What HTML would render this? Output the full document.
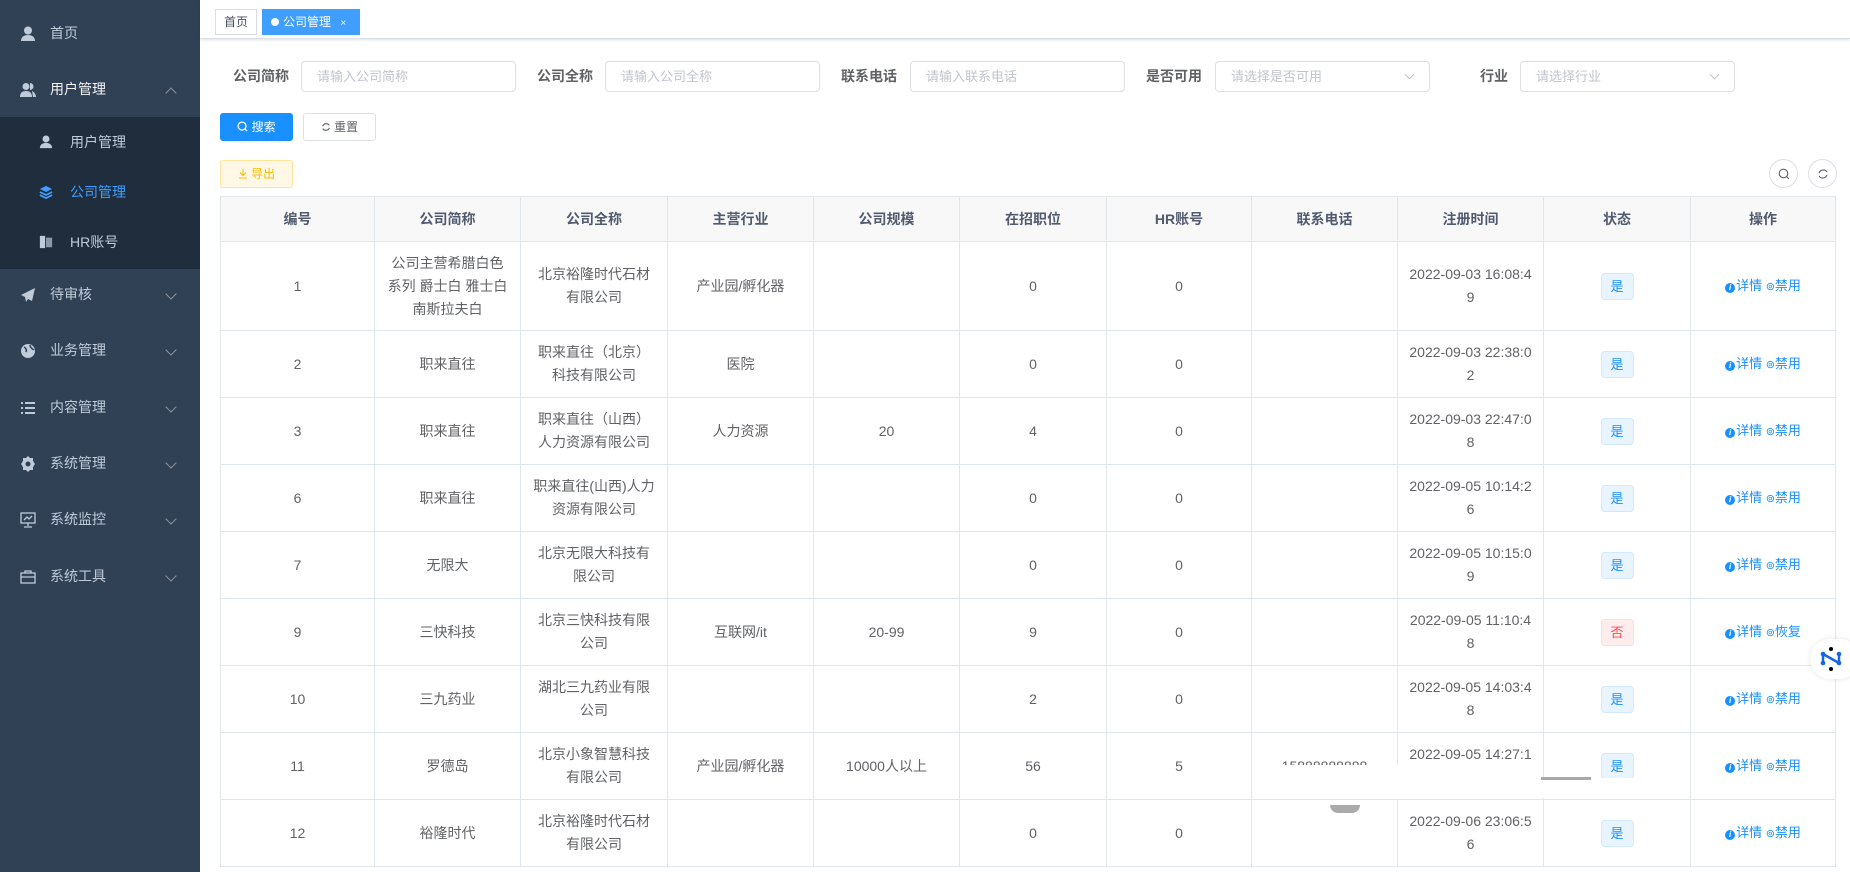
<!DOCTYPE html>
<html><head><meta charset="utf-8">
<style>
*{box-sizing:border-box;margin:0;padding:0}
html{width:1850px;height:872px;overflow:hidden}
body{width:1850px;height:872px;overflow:hidden;background:#fff;font-family:"Liberation Sans","Noto Sans CJK SC",sans-serif;position:relative;color:#606266}
.side{position:absolute;left:0;top:0;width:200px;height:872px;background:#304156}
.mi{position:absolute;left:0;width:200px;height:56px;color:#bfcbd9;font-size:14px;line-height:56px;padding-left:50px}
.mi svg{position:absolute;left:20px;top:21px}
.ar{position:absolute;left:167px;top:24px;width:8px;height:8px;border-right:1px solid #909399;border-bottom:1px solid #909399;transform:rotate(45deg)}
.ar.up{top:28px;transform:rotate(225deg)}
.sub{position:absolute;left:0;top:117px;width:200px;height:152px;background:#1f2d3d}
.si{position:absolute;left:0;width:200px;height:50px;line-height:50px;font-size:14px;color:#bfcbd9;padding-left:70px}
.si svg{position:absolute;left:39px;top:18px}
.tags{position:absolute;left:200px;top:0;right:0;height:39px;border-bottom:1px solid #d8dce5;box-shadow:0 1px 3px rgba(0,0,0,.12)}
.tag{position:absolute;top:9px;height:26px;line-height:24px;font-size:12px;border:1px solid #d8dce5;padding:0 8px;color:#495060;background:#fff}
.lbl{position:absolute;top:66px;font-size:14px;font-weight:bold;color:#606266;line-height:20px}
.inp{position:absolute;top:61px;height:31px;width:215px;border:1px solid #dcdfe6;border-radius:4px;font-size:13px;color:#c0c4cc;padding-left:15px;line-height:29px}
.dn{position:absolute;right:16px;top:9px;width:7px;height:7px;border-right:1px solid #c0c4cc;border-bottom:1px solid #c0c4cc;transform:rotate(45deg)}
.btn{position:absolute;height:28px;width:73px;border-radius:3px;font-size:12px;line-height:26px;text-align:center}
.cb{position:absolute;top:159px;width:29px;height:29px;border:1px solid #dcdfe6;border-radius:50%}
.cb svg{position:absolute;left:8px;top:8px}
table{position:absolute;left:220px;top:196px;width:1615px;border-collapse:collapse;table-layout:fixed;font-size:14px}
th{background:#f8f8f9;color:#515a6e;height:45px;border:1px solid #dfe6ec;font-weight:bold;font-size:14px}
td{border:1px solid #dfe6ec;text-align:center;line-height:23px;height:67px;color:#606266}
.t{display:inline-block;width:33px;height:27px;line-height:25px;font-size:13px;border-radius:4px;border:1px solid #d1e9ff;background:#e8f4ff;color:#1890ff}
.t.n{border-color:#ffdbdb;background:#ffeded;color:#ff4949}
.op{color:#1890ff;font-size:13px}
.op b{display:inline-block;width:10px;height:10px;border-radius:50%;background:#1890ff;color:#fff;font-size:8px;line-height:10px;font-style:italic;vertical-align:0px;margin-right:1px}
.op i{font-style:normal;font-size:11px}
</style></head><body>
<div class="side">
 <div class="mi" style="top:5px"><svg width="16" height="16" viewBox="0 0 16 16"><circle cx="8" cy="4.5" r="4" fill="#bfcbd9"/><path d="M1 15c0-4 3-6 7-6s7 2 7 6z" fill="#bfcbd9"/></svg>首页</div>
 <div class="mi" style="top:61px;color:#f4f4f5"><svg width="16" height="16" viewBox="0 0 16 16"><circle cx="6" cy="4.5" r="3.5" fill="#bfcbd9"/><path d="M0 15c0-4 2-6 6-6s6 2 6 6z" fill="#bfcbd9"/><path d="M10 1a3.5 3.5 0 010 7M12 9c2 1 4 3 4 6h-3" fill="#bfcbd9"/></svg>用户管理<span class="ar up"></span></div>
 <div class="sub">
  <div class="si" style="top:0"><svg width="14" height="14" viewBox="0 0 16 16"><circle cx="8" cy="4.5" r="4" fill="#bfcbd9"/><path d="M1 15c0-4 3-6 7-6s7 2 7 6z" fill="#bfcbd9"/></svg>用户管理</div>
  <div class="si" style="top:50px;color:#409eff"><svg width="14" height="14" viewBox="0 0 16 16"><path d="M8 1l7 3.5-7 3.5-7-3.5z" fill="#409eff"/><path d="M1 8l7 3.5 7-3.5M1 11.5l7 3.5 7-3.5" stroke="#409eff" stroke-width="2" fill="none"/></svg>公司管理</div>
  <div class="si" style="top:100px"><svg width="14" height="14" viewBox="0 0 16 16"><rect x="1" y="1" width="6" height="14" fill="#bfcbd9"/><rect x="8" y="3" width="7" height="11" fill="#8a98a8"/></svg>HR账号</div>
 </div>
 <div class="mi" style="top:266px"><svg width="16" height="16" viewBox="0 0 16 16"><path d="M15 1L1 8l4 2 1 5 2-3 4 2z" fill="#bfcbd9"/></svg>待审核<span class="ar"></span></div>
 <div class="mi" style="top:322px"><svg width="16" height="16" viewBox="0 0 16 16"><circle cx="8" cy="8" r="7" fill="#bfcbd9"/><path d="M4 4c2 1 3 3 2 5M10 2c0 3 3 4 4 5" stroke="#304156" stroke-width="1.5" fill="none"/></svg>业务管理<span class="ar"></span></div>
 <div class="mi" style="top:379px"><svg width="16" height="16" viewBox="0 0 16 16"><path d="M1 2h2v2H1zM1 7h2v2H1zM1 12h2v2H1zM5 2h10v2H5zM5 7h10v2H5zM5 12h10v2H5z" fill="#bfcbd9"/></svg>内容管理<span class="ar"></span></div>
 <div class="mi" style="top:435px"><svg width="16" height="16" viewBox="0 0 16 16"><path d="M8 0l2 2h3v3l2 3-2 3v3h-3l-2 2-2-2H3v-3L1 8l2-3V2h3z" fill="#bfcbd9"/><circle cx="8" cy="8" r="2.5" fill="#304156"/></svg>系统管理<span class="ar"></span></div>
 <div class="mi" style="top:491px"><svg width="16" height="16" viewBox="0 0 16 16"><rect x="1" y="1" width="14" height="10" stroke="#bfcbd9" fill="none" stroke-width="1.3"/><path d="M4 8l3-3 2 2 3-3M8 11v3M4 15h8" stroke="#bfcbd9" fill="none" stroke-width="1.3"/></svg>系统监控<span class="ar"></span></div>
 <div class="mi" style="top:548px"><svg width="16" height="16" viewBox="0 0 16 16"><rect x="1" y="4" width="14" height="10" stroke="#bfcbd9" fill="none" stroke-width="1.3"/><path d="M5 4V2h6v2M1 8h14" stroke="#bfcbd9" fill="none" stroke-width="1.3"/></svg>系统工具<span class="ar"></span></div>
</div>

<div class="tags">
 <div class="tag" style="left:15px">首页</div>
 <div class="tag" style="left:62px;width:98px;background:#409eff;border-color:#409eff;color:#fff;padding-left:8px"><span style="display:inline-block;width:8px;height:8px;border-radius:50%;background:#fff;margin-right:4px"></span>公司管理 <span style="font-size:10px;margin-left:6px">×</span></div>
</div>

<div class="lbl" style="left:233px">公司简称</div><div class="inp" style="left:301px">请输入公司简称</div>
<div class="lbl" style="left:537px">公司全称</div><div class="inp" style="left:605px">请输入公司全称</div>
<div class="lbl" style="left:841px">联系电话</div><div class="inp" style="left:910px">请输入联系电话</div>
<div class="lbl" style="left:1146px">是否可用</div><div class="inp" style="left:1215px">请选择是否可用<span class="dn"></span></div>
<div class="lbl" style="left:1480px">行业</div><div class="inp" style="left:1520px">请选择行业<span class="dn"></span></div>

<div class="btn" style="left:220px;top:113px;background:#1890ff;border:1px solid #1890ff;color:#fff"><svg width="11" height="11" viewBox="0 0 12 12" style="vertical-align:-1px"><circle cx="5.5" cy="5.5" r="4.3" stroke="#fff" stroke-width="1.4" fill="none"/><path d="M8.5 8.5l2.5 2.5" stroke="#fff" stroke-width="1.4"/></svg> 搜索</div>
<div class="btn" style="left:303px;top:113px;border:1px solid #dcdfe6;color:#606266"><svg width="10" height="10" viewBox="0 0 12 12" style="vertical-align:-1px"><path d="M10 4A4.5 4.5 0 002 5M2 8a4.5 4.5 0 008-1" stroke="#606266" stroke-width="1.3" fill="none"/></svg> 重置</div>
<div class="btn" style="left:220px;top:160px;background:#fff8e6;border:1px solid #ffe399;color:#ffba00"><svg width="10" height="11" viewBox="0 0 10 11" style="vertical-align:-1px"><path d="M5 1v6M2 4.5L5 7.5 8 4.5M1 10h8" stroke="#ffba00" stroke-width="1.1" fill="none"/></svg> 导出</div>
<div class="cb" style="left:1769px"><svg width="12" height="12" viewBox="0 0 12 12"><circle cx="5.5" cy="5.5" r="4.3" stroke="#606266" stroke-width="1.1" fill="none"/><path d="M8.5 8.5l2.5 2.5" stroke="#606266" stroke-width="1.1"/></svg></div>
<div class="cb" style="left:1808px"><svg width="12" height="12" viewBox="0 0 12 12"><path d="M10 4A4.5 4.5 0 002 5M2 8a4.5 4.5 0 008-1" stroke="#606266" stroke-width="1.1" fill="none"/></svg></div>

<table>
<colgroup><col style="width:154px"><col style="width:146px"><col style="width:147px"><col style="width:146px"><col style="width:146px"><col style="width:147px"><col style="width:145px"><col style="width:146px"><col style="width:146px"><col style="width:147px"><col style="width:145px"></colgroup>
<tr><th>编号</th><th>公司简称</th><th>公司全称</th><th>主营行业</th><th>公司规模</th><th>在招职位</th><th>HR账号</th><th>联系电话</th><th>注册时间</th><th>状态</th><th>操作</th></tr>
<tr style="height:89px"><td style="height:89px">1</td><td>公司主营希腊白色<br>系列 爵士白 雅士白<br>南斯拉夫白</td><td>北京裕隆时代石材<br>有限公司</td><td>产业园/孵化器</td><td></td><td>0</td><td>0</td><td></td><td>2022-09-03 16:08:4<br>9</td><td><span class="t">是</span></td><td class="op"><b>i</b>详情 <i>⊚</i>禁用</td></tr>
<tr><td>2</td><td>职来直往</td><td>职来直往（北京）<br>科技有限公司</td><td>医院</td><td></td><td>0</td><td>0</td><td></td><td>2022-09-03 22:38:0<br>2</td><td><span class="t">是</span></td><td class="op"><b>i</b>详情 <i>⊚</i>禁用</td></tr>
<tr><td>3</td><td>职来直往</td><td>职来直往（山西）<br>人力资源有限公司</td><td>人力资源</td><td>20</td><td>4</td><td>0</td><td></td><td>2022-09-03 22:47:0<br>8</td><td><span class="t">是</span></td><td class="op"><b>i</b>详情 <i>⊚</i>禁用</td></tr>
<tr><td>6</td><td>职来直往</td><td>职来直往(山西)人力<br>资源有限公司</td><td></td><td></td><td>0</td><td>0</td><td></td><td>2022-09-05 10:14:2<br>6</td><td><span class="t">是</span></td><td class="op"><b>i</b>详情 <i>⊚</i>禁用</td></tr>
<tr><td>7</td><td>无限大</td><td>北京无限大科技有<br>限公司</td><td></td><td></td><td>0</td><td>0</td><td></td><td>2022-09-05 10:15:0<br>9</td><td><span class="t">是</span></td><td class="op"><b>i</b>详情 <i>⊚</i>禁用</td></tr>
<tr><td>9</td><td>三快科技</td><td>北京三快科技有限<br>公司</td><td>互联网/it</td><td>20-99</td><td>9</td><td>0</td><td></td><td>2022-09-05 11:10:4<br>8</td><td><span class="t n">否</span></td><td class="op"><b>i</b>详情 <i>⊚</i>恢复</td></tr>
<tr><td>10</td><td>三九药业</td><td>湖北三九药业有限<br>公司</td><td></td><td></td><td>2</td><td>0</td><td></td><td>2022-09-05 14:03:4<br>8</td><td><span class="t">是</span></td><td class="op"><b>i</b>详情 <i>⊚</i>禁用</td></tr>
<tr><td>11</td><td>罗德岛</td><td>北京小象智慧科技<br>有限公司</td><td>产业园/孵化器</td><td>10000人以上</td><td>56</td><td>5</td><td>15888888888</td><td>2022-09-05 14:27:1<br>9</td><td><span class="t">是</span></td><td class="op"><b>i</b>详情 <i>⊚</i>禁用</td></tr>
<tr><td>12</td><td>裕隆时代</td><td>北京裕隆时代石材<br>有限公司</td><td></td><td></td><td>0</td><td>0</td><td></td><td>2022-09-06 23:06:5<br>6</td><td><span class="t">是</span></td><td class="op"><b>i</b>详情 <i>⊚</i>禁用</td></tr>
</table>

<div style="position:absolute;left:1256px;top:765px;width:285px;height:34px;background:#fff"></div>
<div style="position:absolute;left:1398px;top:778px;width:290px;height:20px;background:#fff"></div>
<div style="position:absolute;left:1541px;top:777px;width:50px;height:3px;background:#aaa"></div>
<div style="position:absolute;left:1330px;top:805px;width:30px;height:8px;background:#aaa;border-radius:0 0 10px 10px"></div>

<div style="position:absolute;left:1810px;top:639px;width:50px;height:40px;background:#fff;border-radius:20px;box-shadow:0 0 6px rgba(0,0,0,.1)">
<svg style="position:absolute;left:10px;top:8px" width="22" height="24" viewBox="0 0 22 24"><path d="M3 7v9M3 7l16 9M19 7v9" stroke="#1565e6" stroke-width="2.5" fill="none"/><circle cx="3" cy="7" r="2.3" fill="#1565e6"/><circle cx="3" cy="16" r="2.3" fill="#1565e6"/><circle cx="19" cy="7" r="2.3" fill="#1565e6"/><circle cx="19" cy="16" r="2.3" fill="#1565e6"/><circle cx="11" cy="2" r="2" fill="#000"/><circle cx="11" cy="22" r="2" fill="#000"/></svg>
</div>
</body></html>
